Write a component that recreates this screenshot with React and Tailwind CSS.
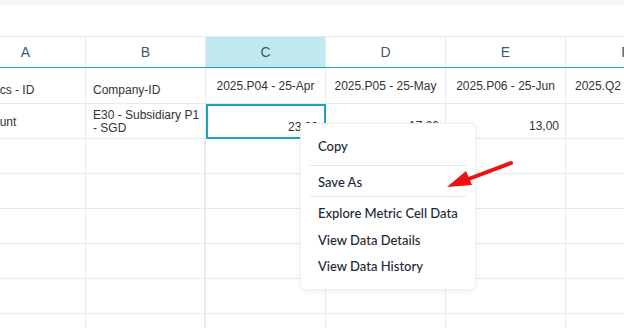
const cols = [
  { key: "A", label: "Metrics - ID", row: "Account", align: "left" },
  { key: "B", label: "Company-ID", row: "E30 - Subsidiary P1 - SGD", align: "left" },
  { key: "C", label: "2025.P04 - 25-Apr", row: "23,00", align: "center" },
  { key: "D", label: "2025.P05 - 25-May", row: "17,00", align: "center" },
  { key: "E", label: "2025.P06 - 25-Jun", row: "13,00", align: "center" },
  { key: "F", label: "2025.Q2 - 25-Q2", row: "", align: "center" },
];

function HeaderRow() {
  return (
    <div className="flex h-[32px] border-t border-[#e3ecf4] border-b-[1px] border-b-[#1ba6b8]">
      {cols.map((c) => (
        <div
          key={c.key}
          className={`w-[120px] shrink-0 flex items-center justify-center border-r border-[#e3ecf4] text-[14px] text-[#3a5a75] ${
            c.key === "C" ? "bg-[#c0e8ee]" : ""
          }`}
        >
          {c.key}
        </div>
      ))}
    </div>
  );
}

function LabelRow() {
  return (
    <div className="flex h-[36px] border-b border-[#e3ecf4]">
      {cols.map((c) => (
        <div
          key={c.key}
          className={`w-[120px] shrink-0 flex border-r border-[#e3ecf4] text-[12px] leading-[14px] text-[#333] whitespace-nowrap overflow-hidden ${
            c.align === "left"
              ? "items-end pb-[6px] pl-[7px]"
              : c.key === "F"
              ? "items-center pl-[9px] pt-[1px]"
              : "items-center justify-center pt-[1px]"
          }`}
        >
          {c.label}
        </div>
      ))}
    </div>
  );
}

function DataRow() {
  return (
    <div className="flex h-[35px] border-b border-[#e3ecf4]">
      {cols.map((c) =>
        c.align === "left" ? (
          <div
            key={c.key}
            className="w-[120px] shrink-0 flex items-center pl-[7px] pr-[4px] pt-[2px] border-r border-[#e3ecf4] text-[12px] leading-[13px] text-[#333]"
          >
            {c.row}
          </div>
        ) : (
          <div
            key={c.key}
            className={`w-[120px] shrink-0 flex items-center justify-end pr-[6px] pt-[10px] text-[12px] leading-[14px] text-[#333] ${
              c.key === "C"
                ? "border-2 border-[#1ba6b8] -mb-[1px]"
                : "border-r border-[#e3ecf4]"
            }`}
          >
            {c.row}
          </div>
        )
      )}
    </div>
  );
}

function EmptyRow() {
  return (
    <div className="flex h-[35px] border-b border-[#e3ecf4]">
      {cols.map((c) => (
        <div
          key={c.key}
          className={`w-[120px] shrink-0 border-[#e3ecf4] ${
            c.key === "B" ? "border-r-2" : "border-r"
          }`}
        />
      ))}
    </div>
  );
}

function ContextMenu() {
  const item =
    "h-[26px] flex items-center pl-[17px] whitespace-nowrap text-[13px] font-medium text-[#1b2838]";
  return (
    <div
      className="absolute left-[300px] top-[123px] w-[176px] h-[167px] bg-white rounded-[6px] border border-[#eef1f4] shadow-[0_1px_6px_rgba(0,0,0,0.08)] pt-[10px] flex flex-col"
      style={{ fontFamily: "Lato, 'Noto Sans', sans-serif" }}
    >
      <div className={item}>Copy</div>
      <div className="mx-[9px] mt-[5px] h-px bg-[#e5e8eb]" />
      <div className={`${item} mt-[4px]`}>Save As</div>
      <div className="mx-[9px] h-px bg-[#e5e8eb]" />
      <div className={`${item} mt-[4px]`}>Explore Metric Cell Data</div>
      <div className={`${item} mt-[1px]`}>View Data Details</div>
      <div className={item}>View Data History</div>
    </div>
  );
}

function Arrow() {
  return (
    <svg className="absolute left-0 top-0" width="624" height="328">
      <line x1="511" y1="163" x2="466" y2="180" stroke="#f01010" strokeWidth="4" strokeLinecap="round" />
      <polygon points="447,187 466,171 472,185" fill="#f01010" />
    </svg>
  );
}

export default function App() {
  return (
    <div
      className="relative w-[624px] h-[328px] overflow-hidden bg-white"
      style={{ fontFamily: "'Liberation Sans', Arial, sans-serif" }}
    >
      <div className="h-[5px] bg-[#f5f7f7]" />
      <div className="h-[31px]" />
      <div className="ml-[-34px] w-[720px]">
        <HeaderRow />
        <LabelRow />
        <DataRow />
        <EmptyRow />
        <EmptyRow />
        <EmptyRow />
        <EmptyRow />
        <EmptyRow />
        <EmptyRow />
      </div>
      <ContextMenu />
      <Arrow />
    </div>
  );
}
